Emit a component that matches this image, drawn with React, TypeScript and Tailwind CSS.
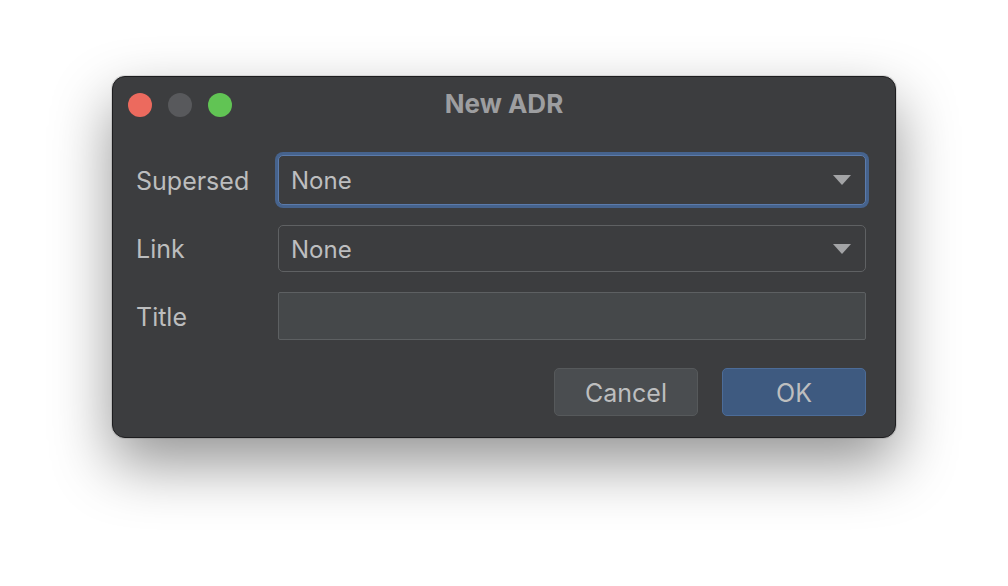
import React from 'react'

function Arrow() {
  return (
    <svg width="18" height="10" viewBox="0 0 18 10" className="shrink-0">
      <path d="M0 0 L18 0 L9 10 Z" fill="#a3a4a6" />
    </svg>
  )
}

function Select({ value, focused }: { value: string; focused?: boolean }) {
  return (
    <div
      className={
        focused
          ? 'flex h-[50px] items-center justify-between rounded-[5px] border border-[#5b7bab] bg-[#3c3d3f] pl-[12px] pr-[14px] shadow-[0_0_0_3px_#46638d]'
          : 'flex h-[47px] items-center justify-between rounded-[5px] border border-[#5f6163] bg-[#3c3d3f] pl-[12px] pr-[14px]'
      }
    >
      <span className="pt-[2px] text-[24px] text-[#bdbebf]">{value}</span>
      <Arrow />
    </div>
  )
}

export default function App() {
  return (
    <div
      className="flex h-[586px] w-[1008px] justify-center bg-white pt-[76px]"
      style={{ fontFamily: 'Inter, "Noto Sans", sans-serif' }}
    >
      <div className="flex h-[362px] w-[784px] flex-col rounded-[13px] border border-[#1d1d1f] bg-[#3c3d3f] shadow-[0_26px_60px_rgba(0,0,0,0.42),0_0_0_1px_rgba(0,0,0,0.1)]">
        <div className="relative flex h-[55px] items-center pl-[15px]">
          <div className="flex gap-[16px]">
            <div className="h-[24px] w-[24px] rounded-full bg-[#ec6a5e]" />
            <div className="h-[24px] w-[24px] rounded-full bg-[#58595c]" />
            <div className="h-[24px] w-[24px] rounded-full bg-[#61c454]" />
          </div>
          <div className="absolute inset-0 flex items-center justify-center pb-[2px] text-[26px] font-bold text-[#9d9ea0]">
            New ADR
          </div>
        </div>
        <div className="flex flex-col gap-[20px] pl-[23px] pr-[29px] pt-[23px]">
          <div className="flex items-center">
            <div className="w-[142px] pt-[3px] text-[25px] text-[#bcbdbe]">Supersed</div>
            <div className="flex-1">
              <Select value="None" focused />
            </div>
          </div>
          <div className="flex items-center">
            <div className="w-[142px] pt-[2px] text-[25px] text-[#bcbdbe]">Link</div>
            <div className="flex-1">
              <Select value="None" />
            </div>
          </div>
          <div className="flex items-center">
            <div className="w-[142px] pt-[3px] text-[25px] text-[#bcbdbe]">Title</div>
            <div className="h-[48px] flex-1 rounded-[2px] border border-[#5d6062] bg-[#45484a]" />
          </div>
        </div>
        <div className="flex justify-end gap-[24px] pr-[29px] pt-[28px]">
          <button className="h-[48px] w-[144px] rounded-[5px] border border-[#56595b] bg-[#4a4d50] pt-[3px] text-[25px] text-[#bdbebf]">
            Cancel
          </button>
          <button className="h-[48px] w-[144px] rounded-[5px] border border-[#4c6c98] bg-[#3e5a80] pt-[3px] text-[25px] text-[#bdbebf]">
            OK
          </button>
        </div>
      </div>
    </div>
  )
}
